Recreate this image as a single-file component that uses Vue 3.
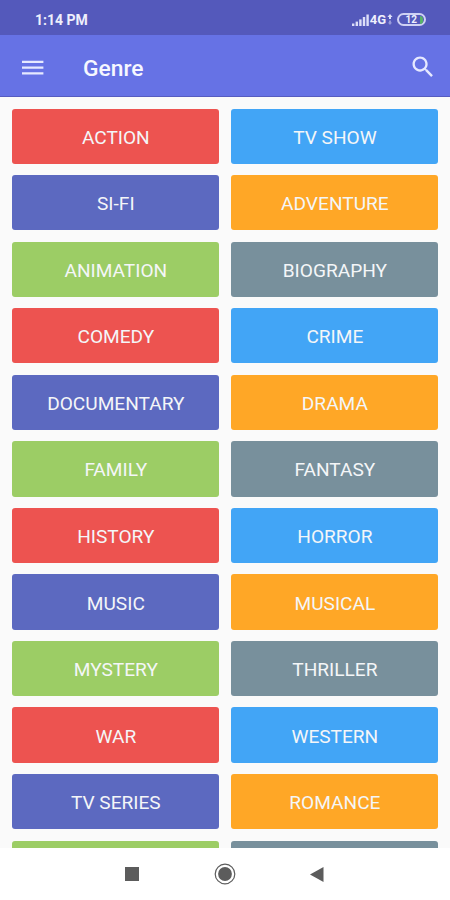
<template>
  <div class="screen">
    <div class="status-bar">
      <span class="time">1:14 PM</span>
      <div class="status-icons">
        <svg class="signal" width="18" height="12" viewBox="0 0 18 12">
          <rect x="0" y="9.5" width="2.4" height="2.5" />
          <rect x="3.6" y="7.6" width="2.4" height="4.4" />
          <rect x="7.2" y="5.4" width="2.4" height="6.6" />
          <rect x="10.8" y="3" width="2.4" height="9" />
          <rect x="14.4" y="0.5" width="2.4" height="11.5" />
        </svg>
        <span class="network">4G</span>
        <svg class="arrows" width="6" height="12" viewBox="0 0 6 12">
          <path d="M3 0 L5.6 3 H4 V5 H2 V3 H0.4 Z" />
          <path class="dim" d="M3 11 L5.2 8.6 H4 V6.6 H2 V8.6 H0.8 Z" />
        </svg>
        <div class="battery">
          <span class="battery-text">12</span>
          <span class="battery-level"></span>
        </div>
      </div>
    </div>

    <div class="toolbar">
      <button class="icon-btn menu-btn">
        <svg width="22" height="16" viewBox="0 0 22 16">
          <path d="M0 0.8 H21.4 V3 H0 Z M0 6.5 H21.4 V8.7 H0 Z M0 12.2 H21.4 V14.4 H0 Z" />
        </svg>
      </button>
      <h1>Genre</h1>
      <button class="icon-btn search-btn">
        <svg width="28" height="28" viewBox="0 0 24 24">
          <path
            d="M15.5 14h-.79l-.28-.27C15.41 12.59 16 11.11 16 9.5 16 5.91 13.09 3 9.5 3S3 5.91 3 9.5 5.91 16 9.5 16c1.61 0 3.09-.59 4.23-1.57l.27.28v.79l5 4.99L20.49 19l-4.99-5zm-6 0C7.01 14 5 11.99 5 9.5S7.01 5 9.5 5 14 7.01 14 9.5 11.99 14 9.5 14z"
          />
        </svg>
      </button>
    </div>

    <div class="content">
      <div class="genre-grid">
        <button
          v-for="(genre, index) in genres"
          :key="index"
          class="genre"
          :class="colors[index % colors.length]"
        >
          {{ genre }}
        </button>
      </div>
    </div>

    <div class="nav-bar">
      <svg width="14" height="14" viewBox="0 0 14 14">
        <rect width="14" height="14" />
      </svg>
      <svg width="22" height="22" viewBox="0 0 22 22">
        <circle class="ring" cx="11" cy="11" r="9.8" />
        <circle cx="11" cy="11" r="6.9" />
      </svg>
      <svg width="14" height="15" viewBox="0 0 14 15">
        <path d="M0 7.5 L13.5 0 V15 Z" />
      </svg>
    </div>
  </div>
</template>

<script setup>
import { ref } from 'vue';

const colors = ['red', 'blue', 'indigo', 'orange', 'green', 'grey'];

// the last two have no label yet, only their top edge is on screen
const genres = ref([
  'ACTION',
  'TV SHOW',
  'SI-FI',
  'ADVENTURE',
  'ANIMATION',
  'BIOGRAPHY',
  'COMEDY',
  'CRIME',
  'DOCUMENTARY',
  'DRAMA',
  'FAMILY',
  'FANTASY',
  'HISTORY',
  'HORROR',
  'MUSIC',
  'MUSICAL',
  'MYSTERY',
  'THRILLER',
  'WAR',
  'WESTERN',
  'TV SERIES',
  'ROMANCE',
  '',
  ''
]);
</script>

<style>
body {
  margin: 0;
}
</style>

<style scoped>
.screen {
  display: flex;
  flex-direction: column;
  width: 450px;
  height: 900px;
  overflow: hidden;
  background: #fafafa;
  font-family: Roboto, "Liberation Sans", sans-serif;
}

.status-bar {
  display: flex;
  justify-content: space-between;
  align-items: center;
  flex: none;
  box-sizing: border-box;
  height: 35px;
  padding: 4px 24px 0 35px;
  background: #5459bb;
  color: #eeeffc;
}

.time {
  font-size: 14px;
  font-weight: 700;
}

.status-icons {
  display: flex;
  align-items: center;
}

.status-icons svg {
  fill: #dcdef8;
}

.signal {
  margin-right: -1px;
}

.network {
  margin-left: 1px;
  font-size: 13px;
  font-weight: 700;
}

.arrows {
  margin-left: 1px;
}

.arrows .dim {
  opacity: 0.5;
}

.battery {
  display: flex;
  align-items: center;
  justify-content: flex-end;
  box-sizing: border-box;
  width: 29px;
  height: 13px;
  margin-left: 4px;
  padding-right: 1px;
  border: 2px solid #cfd1f4;
  border-radius: 7px;
}

.battery-text {
  margin-right: 3px;
  font-size: 10px;
  font-weight: 700;
  line-height: 10px;
}

.battery-level {
  width: 3px;
  height: 8px;
  border-radius: 0 4px 4px 0;
  background: #58b368;
}

.toolbar {
  display: flex;
  align-items: center;
  flex: none;
  box-sizing: border-box;
  height: 62px;
  padding: 0 13px 0 22px;
  border-bottom: 1px solid #565cc0;
  background: #6672e5;
}

.toolbar h1 {
  flex: 1;
  margin: 5px 0 0 39px;
  color: #f6f7ff;
  font-size: 22.8px;
  font-weight: 500;
}

.icon-btn {
  display: flex;
  padding: 0;
  border: none;
  background: none;
  cursor: pointer;
}

.icon-btn svg {
  fill: #e6e9ff;
}

.menu-btn {
  margin-top: 4px;
}

.search-btn {
  margin-top: 2px;
}

.content {
  flex: 1;
  min-height: 0;
  overflow: hidden;
}

.genre-grid {
  display: grid;
  grid-template-columns: 1fr 1fr;
  grid-auto-rows: 55.2px;
  gap: 11.35px 12px;
  padding: 11.7px 11.6px 0 12.3px;
}

.genre {
  padding: 2px 0 0;
  border: none;
  border-radius: 3px;
  color: #f4f6f8;
  font-family: inherit;
  font-size: 19.1px;
  text-align: center;
  cursor: pointer;
}

.red {
  background: #ed5350;
}

.blue {
  background: #42a5f6;
}

.indigo {
  background: #5c69c0;
}

.orange {
  background: #ffa726;
}

.green {
  background: #9ccd65;
}

.grey {
  background: #78909c;
}

.nav-bar {
  display: flex;
  justify-content: space-between;
  align-items: center;
  flex: none;
  box-sizing: border-box;
  height: 52px;
  padding: 0 126px 0 125px;
  background: #ffffff;
}

.nav-bar svg {
  fill: #5c5c5c;
}

.nav-bar .ring {
  fill: none;
  stroke: #5c5c5c;
  stroke-width: 1.2;
}
</style>
